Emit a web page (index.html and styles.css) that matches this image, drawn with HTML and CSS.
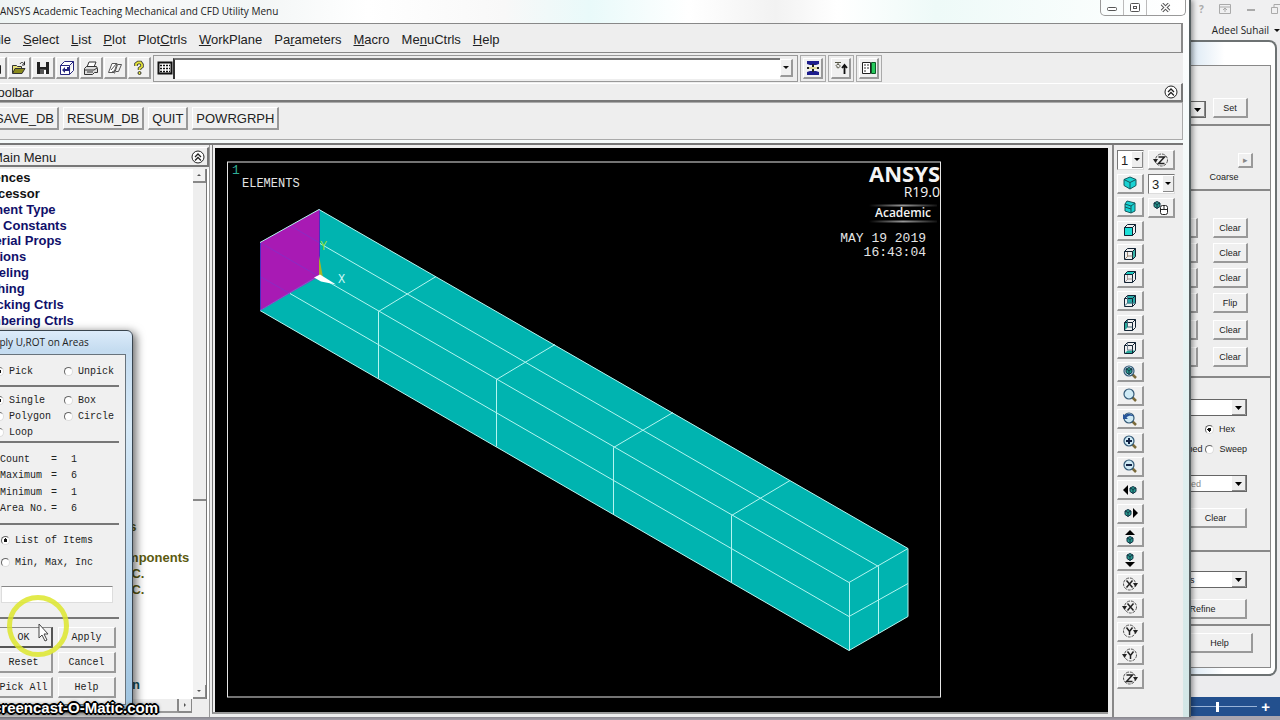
FILE: index.html
```html
<!DOCTYPE html>
<html lang="en">
<head>
    <meta charset="utf-8">
    <title>ANSYS Academic Teaching Mechanical and CFD Utility Menu</title>
    <link rel="stylesheet" href="styles.css">
</head>
<body>
    <svg class="sprite" aria-hidden="true">
        <symbol id="chevrons" viewBox="0 0 14 14"><circle cx="7" cy="7" r="6" fill="#fff" stroke="#222"/><path d="M4 7l3-3 3 3M4 10.500l3-3 3 3" fill="none" stroke="#222" stroke-width="1.300"/></symbol>
        <symbol id="cube-lines" viewBox="0 0 14 14"><path d="M1.500 4.500h8v8h-8zM1.500 4.500l3-3h8l-3 3M12.500 1.500v8l-3 3" fill="none" stroke="#123"/></symbol>
        <symbol id="small-cube" viewBox="0 0 8 8"><path d="M4 .5l3 1.500v3.500L4 7.500 1 5.500V2z" fill="#2a9d8f" stroke="#134"/><path d="M1 2l3 1.500L7 2M4 3.500v4" fill="none" stroke="#134"/></symbol>
        <symbol id="lens" viewBox="0 0 16 16"><path d="M10 10l4 4" stroke="#7a6a3a" stroke-width="2.500"/><circle cx="7" cy="7" r="5" fill="#cfeaf5" stroke="#345a78" stroke-width="1.200"/></symbol>
    </svg>

    <div class="desktop">
        <main class="app-window">
            <header class="titlebar">
                <h1 class="titlebar-text">ANSYS Academic Teaching Mechanical and CFD Utility Menu</h1>
                <div class="window-controls">
                    <button aria-label="Minimize"><svg width="12" height="10"><rect x="1.500" y="4.500" width="9" height="3" rx="1" fill="#fff" stroke="#555"/></svg></button>
                    <button aria-label="Restore"><svg width="12" height="10"><rect x="1.500" y=".5" width="9" height="8" rx="1" fill="#fff" stroke="#555"/><rect x="4.500" y="3.500" width="3" height="2" fill="none" stroke="#555"/></svg></button>
                    <button class="close" aria-label="Close"><svg width="12" height="10"><path d="M2 1l7 7M9 1L2 8" stroke="#555" stroke-width="3.500"/><path d="M2 1l7 7M9 1L2 8" stroke="#fff" stroke-width="1.500"/></svg></button>
                </div>
            </header>

            <nav class="menubar">
                <a href="#"><u>F</u>ile</a>
                <a href="#"><u>S</u>elect</a>
                <a href="#"><u>L</u>ist</a>
                <a href="#"><u>P</u>lot</a>
                <a href="#">Plot<u>C</u>trls</a>
                <a href="#"><u>W</u>orkPlane</a>
                <a href="#">Pa<u>r</u>ameters</a>
                <a href="#"><u>M</u>acro</a>
                <a href="#">Me<u>n</u>uCtrls</a>
                <a href="#"><u>H</u>elp</a>
            </nav>

            <div class="iconbar">
                <div class="icon-group">
                    <button class="raised" aria-label="New"><svg width="16" height="16"><path d="M3.500 2.500h7l3 3v8h-10z" fill="#fff" stroke="#222"/></svg></button>
                    <button class="raised" aria-label="Open"><svg width="16" height="16"><path d="M1.500 13V5.500h4l1 1h4V9" fill="#e8e07a" stroke="#333"/><path d="M1.500 13.500L4 8.500h10l-3 5z" fill="#8a8a1c" stroke="#333"/><path d="M9 4c1-2 3-2 4 0M13.500 1.500V5H11" fill="none" stroke="#222"/></svg></button>
                    <button class="raised" aria-label="Save"><svg width="16" height="16"><path d="M2 2h12v12H2z" fill="#222"/><path d="M5 2h6v5H5z" fill="#eee"/><path d="M5 9h6v5H5z" fill="#555"/><path d="M9 10h2v4H9z" fill="#fff"/></svg></button>
                    <button class="raised" aria-label="Pan zoom rotate"><svg width="16" height="16"><path d="M1.500 5.500h9v9h-9zM1.500 5.500l4-4h9l-4 4M14.500 1.500v9l-4 4" fill="#fff" stroke="#26267e"/><path d="M3 10l3-3v2h2V7h2v4H6v2z" fill="#26267e"/></svg></button>
                    <button class="raised" aria-label="Print"><svg width="16" height="16"><path d="M4 7l2-5h7l-2 5" fill="#fff" stroke="#333"/><path d="M1.500 8.500l2-2h10l1 2v4h-3l-2 2h-8z" fill="#ddd" stroke="#333"/><path d="M2 10h9l3-2M4 12h6" fill="none" stroke="#333"/></svg></button>
                    <button class="raised" aria-label="Report generator"><svg width="16" height="16"><path d="M1.500 12.500L5 3.500h5l-3 9z" fill="#fff" stroke="#555"/><path d="M7.500 13.500l3-9h4l-3 7H9M4 10l6-7M5 12l4-2" fill="none" stroke="#555"/></svg></button>
                    <button class="raised" aria-label="Help"><svg width="16" height="16"><path d="M5 6V4l2-1.500h2.500l1.500 2v2L8.500 8.500V10" fill="none" stroke="#333" stroke-width="3.500"/><path d="M5 6V4l2-1.500h2.500l1.500 2v2L8.500 8.500V10" fill="none" stroke="#e3e23a" stroke-width="1.800"/><circle cx="8.500" cy="13" r="1.500" fill="#e3e23a" stroke="#333"/></svg></button>
                </div>
                <div class="command-group">
                    <button class="keyboard" aria-label="Command window"><svg width="16" height="16"><path d="M1.500 2.500h13v11h-13z" fill="#fff" stroke="#111" stroke-width="2"/><path d="M3 5.500h10M3 8.500h10M3 11.500h10" stroke="#111" stroke-width="1.500" stroke-dasharray="2 1"/></svg></button>
                    <input class="command-input" type="text" aria-label="Command">
                    <button class="drop raised" aria-label="Command history"></button>
                </div>
                <div class="framed"><button class="raised" aria-label="Raise hidden"><svg width="16" height="16"><path d="M2 1h12v3l-3 1H5L2 4zM2 15h12v-3l-3-1H5l-3 1z" fill="#1c1c8c"/><path d="M8 4v8M2 8h12" stroke="#222" stroke-width="2"/><path d="M4 7h8v2H4z" fill="#ddd99a"/></svg></button></div>
                <div class="framed"><button class="raised" aria-label="Reset picking"><svg width="16" height="16"><path d="M2 2.500h6M3 6c0-2 4-2 4 0s-4 3-3 0M5 3v2" fill="none" stroke="#554"/><path d="M11.500 14V6M9 8l2.500-3L14 8" fill="none" stroke="#111" stroke-width="1.800"/></svg></button></div>
                <div class="framed"><button class="raised" aria-label="Contact manager"><svg width="16" height="16"><path d="M1.500 2.500h8v11h-8z" fill="#fff" stroke="#222"/><path d="M3 5h5M3 8h5M3 11h3" stroke="#333" stroke-dasharray="2 1"/><path d="M10.500 2.500h4v11h-4z" fill="#27c95c" stroke="#0b5a26"/></svg></button></div>
            </div>

            <div class="section-head">
                <span>Toolbar</span>
                <button class="collapse" aria-label="Collapse toolbar"><svg width="14" height="14"><use href="#chevrons"/></svg></button>
            </div>
            <div class="quick-buttons">
                <button class="raised">SAVE_DB</button>
                <button class="raised">RESUM_DB</button>
                <button class="raised">QUIT</button>
                <button class="raised">POWRGRPH</button>
            </div>

            <div class="workspace">
                <section class="tree-panel">
                    <div class="section-head tree-head">
                        <h2>Main Menu</h2>
                        <button class="collapse" aria-label="Collapse menu"><svg width="14" height="14"><use href="#chevrons"/></svg></button>
                    </div>
                    <div class="tree-body">
                        <ul class="tree">
                            <li class="top">Preferences</li>
                            <li class="top">Preprocessor</li>
                            <li class="level-1">Element Type</li>
                            <li class="level-1">Real Constants</li>
                            <li class="level-1">Material Props</li>
                            <li class="level-1">Sections</li>
                            <li class="level-1">Modeling</li>
                            <li class="level-1">Meshing</li>
                            <li class="level-1">Checking Ctrls</li>
                            <li class="level-1">Numbering Ctrls</li>
                            <li class="level-6 keypoints">On Keypoints</li>
                            <li class="level-6 components">On Node Components</li>
                            <li class="level-6 symmetry">Symmetry B.C.</li>
                            <li class="level-6 antisymmetry">Antisymm B.C.</li>
                            <li class="level-5 strain">Gen Plane Strain</li>
                        </ul>
                        <div class="scroll-v">
                            <button class="arrow up" aria-label="Scroll up"></button>
                            <div class="thumb"></div>
                            <div class="track"></div>
                            <button class="arrow down" aria-label="Scroll down"></button>
                        </div>
                    </div>
                    <div class="scroll-h">
                        <div class="thumb"></div>
                        <button class="arrow right" aria-label="Scroll right"></button>
                    </div>
                </section>

                <section class="graphics">
                    <svg class="plot" viewBox="215 149 893 561">
                        <rect x="227.500" y="161.500" width="713" height="535" fill="none" stroke="#e6e6e6"/>
                        <path d="M260 310L319 275V209L908 548V616L849 650z" fill="#00b4b0"/>
                        <path d="M260 242L319 209V276L260 310z" fill="#a81ab4"/>
                        <path d="M260 242L319 276M290 225L319 242M260 276L290 293" stroke="#8b2bc4" fill="none"/>
                        <path d="M260.500 242V310M319.500 209V276" stroke="#4a2fc0" fill="none"/>
                        <g class="mesh-lines">
                            <path d="M260 242L319 209L908 548L849 582L319 276"/>
                            <path d="M260 310L849 650L908 616V548"/>
                            <path d="M320 243L878.500 566V633M290 293L849 616L908 583"/>
                            <path d="M849.500 582V650"/>
                            <path d="M436 276L378.500 311V378M555 344L496.500 379V446M673 412L613.500 447V514M790 480L731.500 515V582"/>
                        </g>
                        <path d="M319 255l4 22h-4z" fill="#a4b52a"/>
                        <path d="M260 310L319 275" stroke="#7f5ccf"/>
                        <path d="M314 277l6-3 16 10-15-3z" fill="#fff"/>
                        <text class="label axis-y" x="320" y="249">Y</text>
                        <text class="label axis-x" x="338" y="282">X</text>
                        <text class="label plot-no" x="232" y="173">1</text>
                        <text class="label" x="242" y="186">ELEMENTS</text>
                        <text class="brand" x="940" y="181">ANSYS</text>
                        <text class="release" x="940" y="196">R19.0</text>
                        <defs><linearGradient id="fade"><stop offset="0" stop-color="#000"/><stop offset=".5" stop-color="#999"/><stop offset="1" stop-color="#111"/></linearGradient></defs>
                        <rect x="869" y="204" width="68" height="2" fill="url(#fade)"/>
                        <rect x="869" y="220" width="68" height="2" fill="url(#fade)"/>
                        <text class="edition" x="931" y="216">Academic</text>
                        <text class="label stamp" x="926" y="241">MAY 19 2019</text>
                        <text class="label stamp" x="926" y="255">16:43:04</text>
                    </svg>
                </section>

                <aside class="view-tools">
                    <div class="view-column">
                        <select class="mini-select" aria-label="Window"><option>1</option></select>
                        <button class="raised" aria-label="Isometric view"><svg width="16" height="16"><path d="M8 2l6 2.500v6L8 14l-6-3.500v-6z" fill="#19d3d3" stroke="#14585c"/><path d="M2 4.500l6 3 6-3M8 7.500V14" fill="none" stroke="#14585c"/></svg></button>
                        <button class="raised" aria-label="Oblique view"><svg width="16" height="16"><path d="M5 2l8 2v8l-4 2-6-2V5z" fill="#19d3d3" stroke="#14585c"/><path d="M3 5l6 2 4-3M9 7v7M3 8l6 2" fill="none" stroke="#14585c"/></svg></button>
                        <button class="raised" aria-label="Front view"><svg width="14" height="14"><path d="M1 4h9v9H1z" fill="#1ce0d8"/><use href="#cube-lines"/></svg></button>
                        <button class="raised" aria-label="Right view"><svg width="14" height="14"><path d="M9.500 4.500l3-3v8l-3 3z" fill="#3bb5a9"/><use href="#cube-lines"/><path d="M4.500 5v4h5M2 12l3-3" fill="none" stroke="#987"/></svg></button>
                        <button class="raised" aria-label="Top view"><svg width="14" height="14"><path d="M1.500 4.500l3-3h8l-3 3z" fill="#1cc9bf"/><use href="#cube-lines"/><path d="M4.500 5v4h5M2 12l3-3" fill="none" stroke="#a99"/></svg></button>
                        <button class="raised" aria-label="Back view"><svg width="14" height="14"><path d="M4.500 1.500h8v8h-8z" fill="#28aaa8"/><use href="#cube-lines"/><path d="M4.500 2v7h8M1.500 12l3-3" fill="none" stroke="#478"/></svg></button>
                        <button class="raised" aria-label="Left view"><svg width="14" height="14"><path d="M1.500 4.500l3-3v8l-3 3z" fill="#28aa9c"/><use href="#cube-lines"/><path d="M4.500 2v7h5" fill="none" stroke="#467"/></svg></button>
                        <button class="raised" aria-label="Bottom view"><svg width="14" height="14"><path d="M1.500 12.500l3-3h8l-3 3z" fill="#28aa9c"/><use href="#cube-lines"/><path d="M4.500 2v7h5" fill="none" stroke="#789"/></svg></button>
                        <button class="raised" aria-label="Fit view"><svg width="16" height="16"><use href="#lens"/><use href="#small-cube" x="3" y="3" width="8" height="8"/></svg></button>
                        <button class="raised" aria-label="Zoom model"><svg width="16" height="16"><use href="#lens"/></svg></button>
                        <button class="raised" aria-label="Back up"><svg width="16" height="16"><use href="#lens"/><path d="M1 3v5h5L4.500 6.500C6 4.500 9 4 12 5.500 9 2 5 2 3 4.500z" fill="#28559a"/></svg></button>
                        <button class="raised" aria-label="Zoom in"><svg width="16" height="16"><use href="#lens"/><path d="M4 7h6M7 4v6" stroke="#124" stroke-width="2"/></svg></button>
                        <button class="raised" aria-label="Zoom out"><svg width="16" height="16"><use href="#lens"/><path d="M4 7h6" stroke="#124" stroke-width="2"/></svg></button>
                        <button class="raised" aria-label="Pan left"><svg width="16" height="16"><path d="M6 3v10L1 8z"/><use href="#small-cube" x="7" y="4" width="8" height="8"/></svg></button>
                        <button class="raised" aria-label="Pan right"><svg width="16" height="16"><path d="M11 3v10l5-5z"/><use href="#small-cube" x="2" y="4" width="8" height="8"/></svg></button>
                        <button class="raised" aria-label="Pan up"><svg width="16" height="16"><path d="M3 6h10L8 1z"/><use href="#small-cube" x="4" y="7" width="8" height="8"/></svg></button>
                        <button class="raised" aria-label="Pan down"><svg width="16" height="16"><path d="M3 10h10l-5 5z"/><use href="#small-cube" x="4" y="1" width="8" height="8"/></svg></button>
                        <button class="raised" aria-label="Rotate +X"><svg class="rotate" width="16" height="16"><circle cx="7.500" cy="8" r="6"/><path class="axis" d="M4.500 4.500l6 7M10.500 4.500l-6 7"/><path class="tip" d="M11 7h5l-2.500 4z"/></svg></button>
                        <button class="raised" aria-label="Rotate -X"><svg class="rotate" width="16" height="16"><circle cx="8.500" cy="8" r="6"/><path class="axis" d="M5.500 4.500l6 7M11.500 4.500l-6 7"/><path class="tip" d="M0 7h5l-2.500 4z"/></svg></button>
                        <button class="raised" aria-label="Rotate +Y"><svg class="rotate" width="16" height="16"><circle cx="7.500" cy="8" r="6"/><path class="axis" d="M4.500 4.500l3 4 3-4M7.500 8.500V12"/><path class="tip" d="M11 7h5l-2.500 4z"/></svg></button>
                        <button class="raised" aria-label="Rotate -Y"><svg class="rotate" width="16" height="16"><circle cx="8.500" cy="8" r="6"/><path class="axis" d="M5.500 4.500l3 4 3-4M8.500 8.500V12"/><path class="tip" d="M0 7h5l-2.500 4z"/></svg></button>
                        <button class="raised" aria-label="Rotate +Z"><svg class="rotate" width="16" height="16"><circle cx="7.500" cy="8" r="6"/><path class="axis" d="M4.500 5h6l-6 6.500h6"/><path class="tip" d="M11 7h5l-2.500 4z"/></svg></button>
                    </div>
                    <div class="view-column second">
                        <button class="raised" aria-label="Rotate -Z"><svg class="rotate" width="16" height="16"><circle cx="8.500" cy="8" r="6"/><path class="axis" d="M5.500 5h6l-6 6.500h6"/><path class="tip" d="M0 7h5l-2.500 4z"/></svg></button>
                        <select class="mini-select" aria-label="Rate"><option>3</option></select>
                        <button class="raised" aria-label="Dynamic model mode"><svg width="18" height="16"><use href="#small-cube" x="1" y="1" width="8" height="8"/><rect x="8.500" y="5.500" width="7" height="9" rx="2" fill="#fff" stroke="#222"/><path d="M8 9.500h8M12 5v4" stroke="#222"/></svg></button>
                    </div>
                </aside>
            </div>
        </main>

        <aside class="background-apps">
            <header class="word-title">
                <div class="word-controls">
                    <span>?</span>
                    <svg width="12" height="10"><path d="M.5.5h11v9H.5zM1 3h10M6 8V4M4 6l2-2 2 2" fill="none" stroke="#aaa"/></svg>
                    <svg width="10" height="10"><path d="M1 6h8" stroke="#aaa" stroke-width="2"/></svg>
                    <svg width="9" height="10"><path d="M.5 3.500h6v6h-6zM3 3V.5h6" fill="none" stroke="#aaa"/></svg>
                </div>
                <div class="word-user"><span>Adeel Suhail</span><i class="caret"></i></div>
            </header>

            <section class="mesh-tool">
                <div class="mesh-frame">
                    <div class="mesh-part part-set">
                        <select class="combo short" aria-label="Element attributes"><option>Global</option></select>
                        <button class="raised small">Set</button>
                    </div>
                    <div class="mesh-part part-size">
                        <button class="raised slider-end" aria-label="Coarser">▸</button>
                        <span class="coarse">Coarse</span>
                    </div>
                    <div class="mesh-part part-controls">
                        <div class="pair"><button class="raised set" aria-label="Set lines"></button><button class="raised small">Clear</button></div>
                        <div class="pair"><button class="raised set" aria-label="Set areas"></button><button class="raised small">Clear</button></div>
                        <div class="pair"><button class="raised set" aria-label="Set volumes"></button><button class="raised small">Clear</button></div>
                        <div class="pair"><button class="raised set" aria-label="Copy"></button><button class="raised small">Flip</button></div>
                        <div class="pair spaced"><button class="raised set" aria-label="Set layer"></button><button class="raised small">Clear</button></div>
                        <div class="pair spaced"><button class="raised set" aria-label="Set keypoints"></button><button class="raised small">Clear</button></div>
                    </div>
                    <div class="mesh-part part-mesh">
                        <select class="combo" aria-label="Mesh"><option>Volumes</option></select>
                        <div class="shape-row"><label><input type="radio" name="shape" checked>Hex</label></div>
                        <div class="shape-row"><label><input type="radio" name="mesher">Mapped</label><label><input type="radio" name="mesher">Sweep</label></div>
                        <select class="combo sided" aria-label="Sides" disabled><option>3 or 4 sided</option></select>
                        <button class="raised wide">Clear</button>
                    </div>
                    <div class="mesh-part part-refine">
                        <select class="combo elements" aria-label="Refine at"><option>Elements</option></select>
                        <button class="raised refine">Refine</button>
                    </div>
                    <div class="mesh-part part-help">
                        <button class="raised help">Help</button>
                    </div>
                </div>
            </section>

            <footer class="word-status">
                <input type="range" aria-label="Zoom" min="0" max="100" value="40">
                <button aria-label="Zoom in">+</button>
            </footer>
        </aside>

        <form class="picker">
            <h2 class="picker-title">Apply U,ROT on Areas</h2>
            <div class="picker-body">
                <div class="choice-grid one">
                    <label><input type="radio" name="mode" checked>Pick</label>
                    <label><input type="radio" name="mode">Unpick</label>
                </div>
                <div class="choice-grid three">
                    <label><input type="radio" name="shape-pick" checked>Single</label>
                    <label><input type="radio" name="shape-pick">Box</label>
                    <label><input type="radio" name="shape-pick">Polygon</label>
                    <label><input type="radio" name="shape-pick">Circle</label>
                    <label><input type="radio" name="shape-pick">Loop</label>
                </div>
                <table class="counts">
                    <tr><th>Count</th><td class="equals">=</td><td>1</td></tr>
                    <tr><th>Maximum</th><td class="equals">=</td><td>6</td></tr>
                    <tr><th>Minimum</th><td class="equals">=</td><td>1</td></tr>
                    <tr><th>Area No.</th><td class="equals">=</td><td>6</td></tr>
                </table>
                <div class="entry">
                    <label><input type="radio" name="entry" checked>List of Items</label>
                    <label><input type="radio" name="entry">Min, Max, Inc</label>
                    <input class="entry-text" type="text" aria-label="Items">
                </div>
                <div class="picker-buttons">
                    <button type="button" class="raised default">OK</button>
                    <button type="button" class="raised">Apply</button>
                    <button type="button" class="raised">Reset</button>
                    <button type="button" class="raised">Cancel</button>
                    <button type="button" class="raised">Pick All</button>
                    <button type="button" class="raised">Help</button>
                </div>
            </div>
        </form>

        <svg class="pointer" width="64" height="64" aria-hidden="true">
            <circle cx="32" cy="32" r="28.500" fill="none" stroke="#dde62c" stroke-width="5" opacity=".85"/>
            <path d="M33 30v14l3-3 3 6 2-1-3-6h4z" fill="#fff" stroke="#444"/>
        </svg>
        <div class="watermark">Screencast-O-Matic.com</div>
    </div>
</body>
</html>
```
FILE: styles.css
```css
* {
    margin: 0;
    padding: 0;
    box-sizing: border-box;
}

body {
    font-family: "Liberation Sans", Arial, sans-serif;
    font-size: 13px;
    color: #222;
    background: #a9a6b0;
}

button,
input,
select {
    font: inherit;
    color: inherit;
    border-radius: 0;
}

button {
    display: flex;
    align-items: center;
    justify-content: center;
    background: none;
    border: none;
}

h1,
h2 {
    font-size: inherit;
    font-weight: normal;
}

.sprite {
    position: absolute;
    width: 0;
    height: 0;
}

.desktop {
    position: relative;
    display: grid;
    grid-template-columns: minmax(0, 1fr) 89px;
    grid-template-rows: minmax(0, 1fr);
    height: 100vh;
    min-height: 720px;
    padding-bottom: 3px;
    overflow: hidden;
}

.raised {
    background: #f0f0f0;
    border: 1px solid #fff;
    border-right: 2px solid #999;
    border-bottom: 2px solid #999;
}

/* main window, hangs off the left edge of the screen */
.app-window {
    display: flex;
    flex-direction: column;
    position: relative;
    z-index: 2;
    margin-left: -52px;
    padding-right: 6px;
    background: linear-gradient(#fff, #e6f3f3 50%, #d2e6e6);
    border-right: 2px solid #555e60;
    box-shadow: 2px 0 5px rgba(0, 0, 0, 0.4);
}

.titlebar {
    display: flex;
    justify-content: space-between;
    height: 23px;
    padding-left: 52px;
    background: linear-gradient(90deg, #e4f0ee 0, #fafafa 10%, #f3f6f6 25%, #fff 34%, #f8f8f8 45%, #e9fafa 52%, #fff 60%, #f2f2f2 67%, #fff 72%, #eefaf8 80%, #fff);
}

.titlebar-text {
    font-family: "Open Sans", sans-serif;
    font-size: 10px;
    line-height: 23px;
    white-space: nowrap;
}

.window-controls {
    display: flex;
    height: 16px;
    margin-right: -3px;
    border: 1px solid #999;
    border-top: none;
    border-radius: 0 0 5px 5px;
}

.window-controls button {
    width: 23px;
    border-right: 1px solid #bbb;
}

.window-controls .close {
    width: 38px;
    border: none;
}

.menubar {
    display: flex;
    align-items: center;
    gap: 12px;
    height: 30px;
    padding: 2px 0 0 41px;
    background: #eee;
    border: 1px solid #888;
    border-right: 2px solid #888;
}

.menubar a {
    color: inherit;
    text-decoration: none;
}

.iconbar {
    display: flex;
    align-items: center;
    gap: 2px;
    height: 30px;
    padding-left: 36px;
    background: #eee;
}

.icon-group {
    display: flex;
    gap: 1px;
}

.icon-group button {
    width: 23px;
    height: 22px;
}

.command-group {
    display: flex;
    align-items: center;
    width: 645px;
    height: 27px;
    padding: 2px 4px 2px 2px;
    border: 1px solid #999;
}

.keyboard {
    width: 17px;
    height: 20px;
}

.command-input {
    flex: 1;
    min-width: 0;
    height: 21px;
    background: #fff;
    border: none;
    border-top: 2px solid #777;
    border-left: 2px solid #333;
}

.drop {
    width: 13px;
    height: 18px;
}

.drop::before,
.caret {
    content: "";
    border: 3px solid transparent;
    border-top-color: #111;
    border-bottom: none;
}

.framed {
    padding: 2px;
    border: 1px solid #aaa;
}

.framed button {
    width: 20px;
    height: 21px;
}

.section-head {
    display: flex;
    align-items: center;
    justify-content: space-between;
    height: 19px;
    padding: 0 3px 0 43px;
    background: #eee;
    border-top: 1px solid #fff;
    border-right: 2px solid #777;
    border-bottom: 2px solid #777;
}

.quick-buttons {
    display: flex;
    align-items: center;
    gap: 4px;
    height: 38px;
    margin-bottom: 3px;
    padding: 0 0 5px 42px;
    background: #eee;
    border: 1px solid #aaa;
}

.quick-buttons button {
    height: 23px;
    padding: 0 3px;
}

.workspace {
    flex: 1;
    display: flex;
    min-height: 0;
    background: #eee;
    border-top: 2px solid #777;
}

.tree-panel {
    display: flex;
    flex-direction: column;
    width: 262px;
    margin-right: 2px;
    border-right: 1px solid #999;
}

.tree-head {
    height: 20px;
    margin: 2px 0;
    padding: 1px 2px 0 44px;
}

.tree-body {
    flex: 1;
    display: flex;
    min-height: 0;
    background: #fff;
}

.tree {
    flex: 1;
    display: grid;
    grid-template-rows: repeat(33, minmax(0, 1fr));
    padding: 1px 0 6px;
    list-style: none;
    font-weight: bold;
    line-height: 16px;
    white-space: nowrap;
    color: #10106a;
}

.tree .top {
    padding-left: 8px;
    color: #111;
}

.level-1 {
    padding-left: 24px;
}

.level-5 {
    padding-left: 88px;
    color: #0d5058;
}

.level-6 {
    padding-left: 104px;
    color: #5c5a10;
}

.keypoints { grid-row: 23; }
.components { grid-row: 25; }
.symmetry { grid-row: 26; }
.antisymmetry { grid-row: 27; }
.strain { grid-row: 33; }

.scroll-v {
    display: flex;
    flex-direction: column;
    width: 14px;
    margin-right: 2px;
    background: #f2f2f2;
    border-right: 1px solid #777;
}

.scroll-v .thumb {
    flex: 317;
    background: #eee;
    border-bottom: 2px solid #888;
}

.scroll-v .track {
    flex: 184;
}

.arrow {
    width: 13px;
    height: 14px;
    border-right: 1px solid #888;
    border-bottom: 2px solid #888;
}

.arrow::before {
    content: "";
    border: 2px solid transparent;
}

.arrow.up::before { border-bottom-color: #555; border-top: none; }
.arrow.down::before { border-top-color: #555; border-bottom: none; }
.arrow.right::before { border-left-color: #555; border-right: none; }

.scroll-h {
    display: flex;
    height: 14px;
    margin-bottom: 4px;
    padding-right: 17px;
}

.scroll-h .thumb {
    flex: 1;
    border-right: 2px solid #888;
    border-bottom: 2px solid #999;
}

.graphics {
    flex: 1;
    min-width: 0;
    margin: 0 4px 3px 0;
    padding: 3px 0 0 2px;
    border-left: 1px solid #777;
    border-bottom: 2px solid #999;
}

.plot {
    display: block;
    width: 100%;
    height: 100%;
    background: #000;
}

.mesh-lines {
    fill: none;
    stroke: #b4f5f0;
}

.label {
    font-family: "Liberation Mono", monospace;
    font-size: 12px;
    fill: #e4e4e4;
}

.axis-y { fill: #8ee03a; }
.axis-x { fill: #c9f7f4; }

.plot-no {
    font-size: 13px;
    fill: #2fae96;
}

.stamp {
    font-size: 13px;
    text-anchor: end;
}

.brand,
.release,
.edition {
    font-family: "Open Sans", sans-serif;
    text-anchor: end;
    fill: #f4f4f4;
}

.brand {
    font-size: 22px;
    font-weight: bold;
}

.release { font-size: 14px; }

.edition {
    font-size: 12px;
    font-weight: 600;
}

.view-tools {
    display: flex;
    gap: 4px;
    width: 71px;
    padding: 5px 4px 28px 3px;
    border-left: 2px solid #888;
}

.view-column {
    display: flex;
    flex-direction: column;
    justify-content: space-between;
    width: 27px;
}

.view-column.second {
    justify-content: flex-start;
    gap: 4px;
}

.view-column button,
.mini-select {
    width: 27px;
    height: 20px;
}

.mini-select {
    appearance: none;
    padding-left: 3px;
    background: url("data:image/svg+xml,%3Csvg xmlns='http://www.w3.org/2000/svg' width='11' height='16'%3E%3Cpath d='M0 0h11v16H0z' fill='%23eee'/%3E%3Cpath d='M10.500 0v15.500H0' fill='none' stroke='%23888'/%3E%3Cpath d='M2 6h6L5 9z'/%3E%3C/svg%3E") right center no-repeat #fff;
    border: 1px solid #ddd;
    border-top-color: #777;
    border-left-color: #777;
}

.rotate circle {
    fill: none;
    stroke: #555;
    stroke-dasharray: 3 1;
}

.rotate .axis {
    fill: none;
    stroke: #222;
    stroke-width: 1.500;
}

.rotate .tip {
    fill: #222;
    stroke: none;
}

/* windows visible behind, on the right */
.background-apps {
    display: flex;
    flex-direction: column;
    min-width: 0;
    margin-bottom: 1px;
    background: #ececee;
    font-size: 9px;
}

.word-title {
    height: 40px;
    font-family: "Open Sans", sans-serif;
    font-size: 10px;
    background: #f0f0f1;
}

.word-controls {
    display: flex;
    align-items: center;
    justify-content: space-between;
    height: 18px;
    padding-left: 8px;
    font-weight: bold;
    color: #aaa;
}

.word-user {
    display: flex;
    align-items: center;
    justify-content: flex-end;
    gap: 5px;
    height: 24px;
    white-space: nowrap;
}

.mesh-tool {
    height: 636px;
    margin-right: 3px;
    padding: 23px 4px 6px 0;
    background: linear-gradient(90deg, #dce9f4, #fff 40%) #f6fafa;
    border: 2px solid #6d7273;
    border-left: none;
    border-radius: 0 8px 8px 0;
}

.mesh-frame {
    display: flex;
    flex-direction: column;
    height: 100%;
    background: #eee;
    border: 1px solid #888;
    border-left: none;
}

.mesh-part {
    display: flex;
    flex-direction: column;
    align-items: flex-end;
    padding-right: 22px;
    border-bottom: 2px solid #888;
}

.mesh-part:last-child {
    border-bottom: none;
}

.mesh-part button {
    flex-shrink: 0;
    height: 20px;
}

.mesh-part .small { width: 35px; }

.part-set {
    flex-direction: row;
    align-items: flex-end;
    justify-content: flex-end;
    gap: 7px;
    height: 60px;
    padding-bottom: 6px;
}

.combo {
    appearance: none;
    flex-shrink: 0;
    width: 110px;
    height: 17px;
    background: url("data:image/svg+xml,%3Csvg xmlns='http://www.w3.org/2000/svg' width='14' height='15'%3E%3Cpath d='M0 0h14v15H0z' fill='%23eee'/%3E%3Cpath d='M13.500 0v14.500H0' fill='none' stroke='%23888'/%3E%3Cpath d='M3 6h7L6.500 10z'/%3E%3C/svg%3E") right center no-repeat #fff;
    border: 1px solid #666;
}

.part-size {
    height: 65px;
    padding-top: 27px;
    padding-right: 17px;
}

.mesh-part .slider-end {
    width: 15px;
    height: 15px;
    margin-bottom: 3px;
    color: #888;
}

.coarse {
    width: 58px;
    text-align: center;
    line-height: 12px;
}

.part-controls {
    gap: 5px;
    height: 187px;
    padding-top: 27px;
}

.pair {
    display: flex;
    justify-content: flex-end;
    gap: 15px;
}

.pair.spaced { margin-top: 2px; }
.mesh-part .set { width: 36px; }

.part-mesh {
    height: 174px;
    padding-top: 21px;
    padding-right: 23px;
}

.shape-row {
    display: flex;
    justify-content: flex-end;
    gap: 3px;
    width: 88px;
    height: 20px;
}

.shape-row:first-of-type { margin-top: 3px; }

.shape-row label,
.picker label {
    display: flex;
    align-items: center;
    gap: 5px;
    white-space: nowrap;
}

.shape-row:first-of-type label { padding-right: 12px; }

input[type="radio"] {
    appearance: none;
    flex-shrink: 0;
    width: 9px;
    height: 9px;
    background: #fff;
    border: 1px solid #ddd;
    border-top-color: #666;
    border-left-color: #666;
    border-radius: 50%;
}

input[type="radio"]:checked {
    background: radial-gradient(circle, #111 2px, #fff 2px);
}

.sided {
    margin-top: 16px;
    padding-left: 16px;
    color: #888;
    opacity: 1;
}

.part-mesh .wide {
    width: 62px;
    margin-top: 16px;
}

.part-refine {
    height: 74px;
    padding-top: 19px;
    padding-right: 23px;
}

.elements {
    padding-left: 19px;
}

.part-refine .refine {
    width: 88px;
    margin-top: 11px;
}

.part-help {
    padding: 7px 17px 0 0;
}

.part-help .help { width: 66px; }

.word-status {
    display: flex;
    align-items: center;
    gap: 4px;
    height: 19px;
    margin-top: auto;
    padding: 0 10px 0 0;
    background: #23508e;
    color: #fff;
}

.word-status input {
    appearance: none;
    flex: 1;
    min-width: 0;
    height: 1px;
    background: #9ab4d8;
}

.word-status input::-webkit-slider-thumb {
    appearance: none;
    width: 3px;
    height: 10px;
    background: #fff;
}

.word-status button {
    font-size: 15px;
    font-weight: bold;
    line-height: 15px;
}

/* picking dialog, floats over the main window */
.picker {
    position: absolute;
    z-index: 3;
    top: 330px;
    left: -16px;
    width: 149px;
    padding: 0 6px 6px;
    font-family: "Liberation Mono", monospace;
    font-size: 10px;
    background: linear-gradient(#dcebfa, #c5dcf0 5%, #d6e9f7 25%, #9fc4e0);
    border: 1px solid #39444e;
    border-radius: 6px;
    box-shadow: 3px 2px 10px rgba(0, 0, 0, 0.6);
}

.picker-title {
    height: 23px;
    margin-left: -4px;
    font-family: "Open Sans", sans-serif;
    line-height: 23px;
}

.picker-body {
    padding: 0 6px 2px 3px;
    background: #f0f0f0;
    border: 1px solid #68737c;
}

.choice-grid {
    display: grid;
    grid-template-columns: 69px 1fr;
    border-bottom: 2px solid #777;
}

.choice-grid.one {
    padding: 11px 0 8px;
}

.choice-grid.three {
    grid-auto-rows: 16px;
    padding: 5px 0 1px;
}

.counts {
    width: 100%;
    height: 82px;
    padding: 9px 0 6px;
    border-bottom: 2px solid #777;
    border-spacing: 0;
    table-layout: fixed;
    line-height: 16px;
}

.counts th {
    width: 56px;
    padding-left: 5px;
    font-weight: normal;
    text-align: left;
}

.counts .equals {
    width: 20px;
}

.entry {
    display: grid;
    gap: 11px;
    padding: 10px 0 14px 6px;
    border-bottom: 2px solid #777;
}

.entry-text {
    width: 112px;
    height: 17px;
    margin-top: 7px;
    background: #fff;
    border: 1px solid #ddd;
    border-top-color: #888;
}

.picker-buttons {
    display: grid;
    grid-template-columns: 58px 58px;
    gap: 4px 5px;
    padding: 8px 0 4px;
}

.picker-buttons button {
    height: 21px;
}

.picker-buttons .default {
    border-color: #888 #555 #555;
}

.pointer {
    position: absolute;
    z-index: 4;
    top: 594px;
    left: 6px;
}

.watermark {
    position: absolute;
    z-index: 4;
    bottom: 3px;
    left: -17px;
    font-size: 15px;
    font-weight: bold;
    line-height: 18px;
    color: #fff;
    text-shadow: -2px 0 #000, 2px 0 #000, 0 -2px #000, 0 2px #000, 1px 1px #000, -1px -1px #000, 1px -1px #000, -1px 1px #000, 0 0 4px #000;
}
```
